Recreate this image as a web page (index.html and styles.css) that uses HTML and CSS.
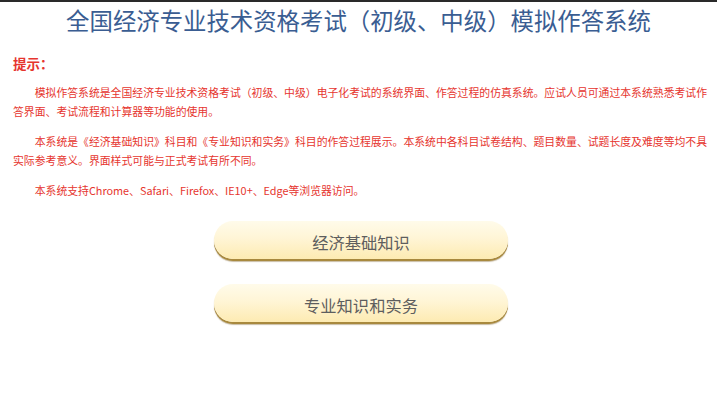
FILE: index.html
```html
<!DOCTYPE html>
<html lang="zh-CN">
<head>
<meta charset="utf-8">
<title>全国经济专业技术资格考试（初级、中级）模拟作答系统</title>
<link rel="stylesheet" href="styles.css">
</head>
<body>
<div class="page">
  <h1 class="title">全国经济专业技术资格考试（初级、中级）模拟作答系统</h1>
  <div class="tips">
    <div class="tips-head">提示：</div>
    <p class="tip">模拟作答系统是全国经济专业技术资格考试（初级、中级）电子化考试的系统界面、作答过程的仿真系统。应试人员可通过本系统熟悉考试作答界面、考试流程和计算器等功能的使用。</p>
    <p class="tip">本系统是《经济基础知识》科目和《专业知识和实务》科目的作答过程展示。本系统中各科目试卷结构、题目数量、试题长度及难度等均不具实际参考意义。界面样式可能与正式考试有所不同。</p>
    <p class="tip">本系统支持Chrome、Safari、Firefox、IE10+、Edge等浏览器访问。</p>
  </div>
  <div class="actions">
    <a class="subject-btn" href="#">经济基础知识</a>
    <a class="subject-btn" href="#">专业知识和实务</a>
  </div>
</div>
</body>
</html>
```

FILE: styles.css
```css
html, body {
  margin: 0;
  padding: 0;
  background: #ffffff;
}

body {
  font-family: "Noto Sans CJK SC", "Noto Sans", sans-serif;
}

.page {
  border-top: 2px solid #2a2a2a;
  width: 717px;
  min-height: 406px;
}

.title {
  margin: 0;
  height: 36px;
  line-height: 36px;
  font-size: 23.4px;
  font-weight: normal;
  color: #3a5d92;
  text-align: center;
  white-space: nowrap;
}

.tips {
  padding: 0 0 0 13px;
  width: 696px;
  color: #e6352e;
}

.tips-head {
  margin-top: 16px;
  font-size: 13.5px;
  line-height: 19px;
  font-weight: bold;
}

.tip {
  margin: 10px 0 0 0;
  font-size: 10.85px;
  line-height: 19px;
  text-indent: 2em;
}

.tip + .tip {
  margin-top: 11px;
}

.actions {
  display: flex;
  flex-direction: column;
  align-items: center;
  gap: 25px;
  margin-top: 21px;
  padding-left: 5px;
}

.subject-btn {
  display: flex;
  align-items: center;
  justify-content: center;
  box-sizing: border-box;
  width: 294px;
  height: 38px;
  padding-top: 4px;
  border-radius: 19px;
  background: linear-gradient(180deg, #fffbea 0%, #fff5d6 45%, #fdebb2 100%);
  box-shadow: 0 2px 0 #a8893e, 0 3px 1px rgba(120, 90, 30, 0.4);
  color: #5e5e5e;
  font-size: 16.3px;
  text-decoration: none;
}
```
